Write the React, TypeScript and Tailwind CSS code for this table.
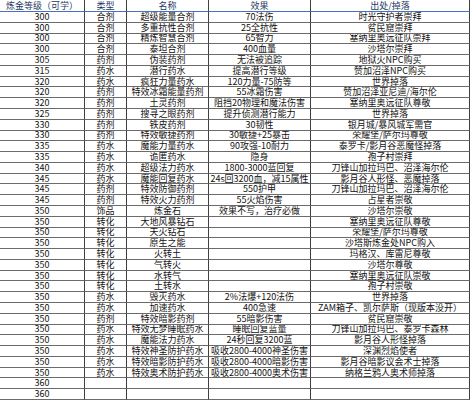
import React from "react";

const rows: [string, string, string, string, string][] = [
  ["300", "合剂", "超级能量合剂", "70法伤", "时光守护者崇拜"],
  ["300", "合剂", "多重抗性合剂", "25全抗性", "贫民窟崇拜"],
  ["300", "合剂", "精炼智慧合剂", "65智力", "塞纳里奥远征队崇拜"],
  ["300", "合剂", "泰坦合剂", "400血量", "沙塔尔崇拜"],
  ["305", "药剂", "伪装药剂", "无法被追踪", "地狱火NPC购买"],
  ["315", "药水", "潜行药水", "提高潜行等级", "赞加沼泽NPC购买"],
  ["320", "药水", "疯狂力量药水", "120力量-75防等", "世界掉落"],
  ["320", "药剂", "特效冰霜能量药剂", "55冰霜伤害", "赞加沼泽亚尼迪/海尔伦"],
  ["320", "药剂", "土灵药剂", "阻挡20物理和魔法伤害", "塞纳里奥远征队尊敬"],
  ["325", "药剂", "搜寻之眼药剂", "提升侦测潜行能力", "世界掉落"],
  ["330", "药剂", "铁皮药剂", "30韧性", "银月城/暴风城军需官"],
  ["330", "药剂", "特效敏捷药剂", "30敏捷+25暴击", "荣耀堡/萨尔玛尊敬"],
  ["335", "药水", "魔能力量药水", "90攻强-10耐力", "泰罗卡/影月谷恶魔怪掉落"],
  ["335", "药水", "诡匿药水", "隐身", "孢子村崇拜"],
  ["340", "药水", "超级法力药水", "1800-3000蓝回复", "刀锋山加拉玛巴、沼泽海尔伦"],
  ["345", "药水", "魔能回复药水", "24s回3200血，减15属性", "影月谷人形怪、恶魔掉落"],
  ["345", "药剂", "特效防御药剂", "550护甲", "刀锋山加拉玛巴、沼泽海尔伦"],
  ["345", "药剂", "特效火力药剂", "55火焰伤害", "占星者崇敬"],
  ["350", "饰品", "炼金石", "效果不写，治疗必做", "沙塔尔崇敬"],
  ["350", "转化", "大地风暴钻石", "", "塞纳里奥远征队尊敬"],
  ["350", "转化", "天火钻石", "", "荣耀堡/萨尔玛尊敬"],
  ["350", "转化", "原生之能", "", "沙塔斯炼金处NPC购入"],
  ["350", "转化", "火转土", "", "玛格汉、库雷尼尊敬"],
  ["350", "转化", "气转火", "", "沙塔尔尊敬"],
  ["350", "转化", "水转气", "", "塞纳里奥远征队崇敬"],
  ["350", "转化", "土转水", "", "孢子村崇敬"],
  ["350", "药水", "毁灭药水", "2%法爆+120法伤", "世界掉落"],
  ["350", "药水", "加速药水", "400急速", "ZAM箱子、凯尔萨斯（现版本没开）"],
  ["350", "药剂", "特效暗影药剂", "55暗影伤害", "贫民窟崇敬"],
  ["350", "药水", "特效无梦睡眠药水", "睡眠回复蓝量", "刀锋山加拉玛巴、泰罗卡森林"],
  ["350", "药水", "魔能法力药水", "24秒回复3200蓝", "影月谷人形怪掉落"],
  ["350", "药水", "特效神圣防护药水", "吸收2800-4000神圣伤害", "深渊烈焰使者"],
  ["350", "药水", "特效暗影防护药水", "吸收2800-4000暗影伤害", "影月谷暗影议会术士掉落"],
  ["350", "药水", "特效奥术防护药水", "吸收2800-4000奥术伤害", "纳格兰鸦人奥术师掉落"],
  ["360", "", "", "", ""],
  ["360", "", "", "", ""],
];

const cell =
  "flex items-center justify-center overflow-hidden whitespace-nowrap leading-[10px] border-r border-b border-r-[#404040] border-b-[#6b6b6b]";

export default function App() {
  return (
    <div
      className="w-[471px] h-[400px] overflow-hidden bg-white text-[#111]"
      style={{ fontFamily: '"Noto Sans CJK SC", "DejaVu Sans", sans-serif' }}
    >
      <div className="grid grid-cols-[85px_42px_82px_102px_159px] grid-rows-[12px_repeat(36,1fr)] h-[400px] text-[9px]">
        <div className={cell + " border-b-[#4472c4] text-[#1f3864]"}>炼金等级（可学）</div>
        <div className={cell + " border-b-[#4472c4] text-[#1f3864]"}>类型</div>
        <div className={cell + " border-b-[#4472c4] text-[#1f3864]"}>名称</div>
        <div className={cell + " border-b-[#4472c4] text-[#1f3864]"}>效果</div>
        <div className={cell + " border-b-[#4472c4] text-[#1f3864]"}>出处/掉落</div>
        {rows.map((r, i) => (
          <React.Fragment key={i}>
            {r.map((c, j) => (
              <div key={j} className={cell}>
                {c}
              </div>
            ))}
          </React.Fragment>
        ))}
      </div>
    </div>
  );
}
